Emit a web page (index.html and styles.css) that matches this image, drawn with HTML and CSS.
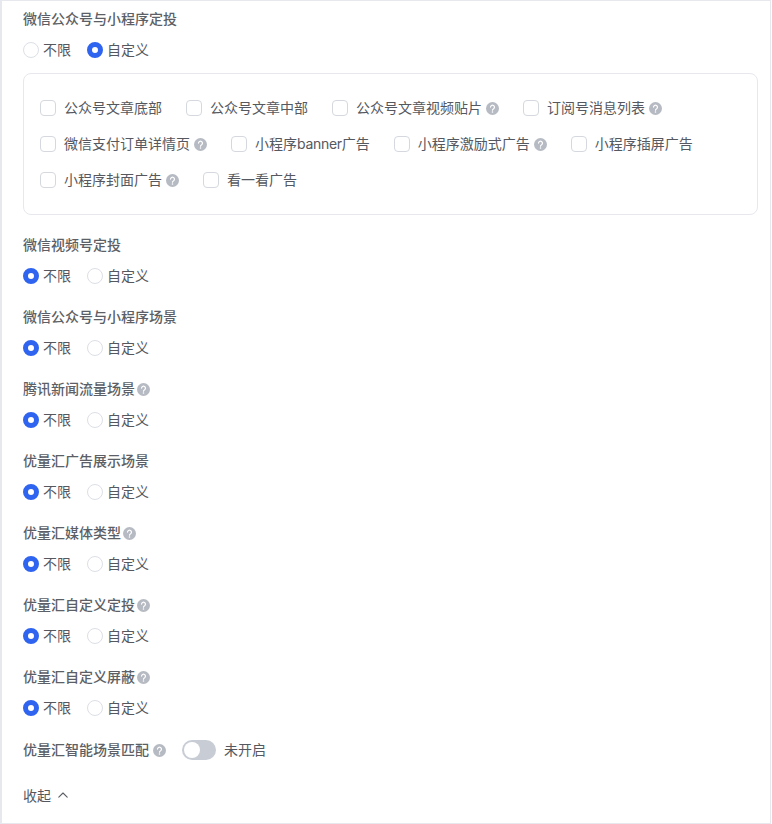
FILE: index.html
```html
<!DOCTYPE html>
<html lang="zh-CN">
<head>
    <meta charset="UTF-8">
    <title>定投设置</title>
    <link rel="stylesheet" href="styles.css">
</head>
<body>
<svg class="defs" width="0" height="0">
    <symbol id="help" viewBox="0 0 14 14">
        <circle cx="7" cy="7" r="7" fill="#b6bac2"/>
        <path d="M4.9 5.5a2.1 2.1 0 1 1 3.3 1.75c-.8.5-1.2.85-1.2 1.6" fill="none" stroke="#fff" stroke-width="1.3" stroke-linecap="round"/>
        <circle cx="7" cy="10.7" r=".85" fill="#fff"/>
    </symbol>
</svg>
<div class="panel">
    <section class="field">
        <div class="field-label">微信公众号与小程序定投</div>
        <div class="radios">
            <label class="radio"><i class="dot"></i>不限</label>
            <label class="radio on"><i class="dot"></i>自定义</label>
        </div>
        <div class="option-box">
            <div class="check-row">
                <label class="check"><i class="box"></i>公众号文章底部</label>
                <label class="check"><i class="box"></i>公众号文章中部</label>
                <label class="check"><i class="box"></i>公众号文章视频贴片<svg class="help"><use href="#help"/></svg></label>
                <label class="check"><i class="box"></i>订阅号消息列表<svg class="help"><use href="#help"/></svg></label>
            </div>
            <div class="check-row">
                <label class="check"><i class="box"></i>微信支付订单详情页<svg class="help"><use href="#help"/></svg></label>
                <label class="check"><i class="box"></i>小程序<span class="latin">banner</span>广告</label>
                <label class="check"><i class="box"></i>小程序激励式广告<svg class="help"><use href="#help"/></svg></label>
                <label class="check"><i class="box"></i>小程序插屏广告</label>
            </div>
            <div class="check-row">
                <label class="check"><i class="box"></i>小程序封面广告<svg class="help"><use href="#help"/></svg></label>
                <label class="check"><i class="box"></i>看一看广告</label>
            </div>
        </div>
    </section>

    <section class="field">
        <div class="field-label">微信视频号定投</div>
        <div class="radios">
            <label class="radio on"><i class="dot"></i>不限</label>
            <label class="radio"><i class="dot"></i>自定义</label>
        </div>
    </section>

    <section class="field">
        <div class="field-label">微信公众号与小程序场景</div>
        <div class="radios">
            <label class="radio on"><i class="dot"></i>不限</label>
            <label class="radio"><i class="dot"></i>自定义</label>
        </div>
    </section>

    <section class="field">
        <div class="field-label">腾讯新闻流量场景<svg class="help"><use href="#help"/></svg></div>
        <div class="radios">
            <label class="radio on"><i class="dot"></i>不限</label>
            <label class="radio"><i class="dot"></i>自定义</label>
        </div>
    </section>

    <section class="field">
        <div class="field-label">优量汇广告展示场景</div>
        <div class="radios">
            <label class="radio on"><i class="dot"></i>不限</label>
            <label class="radio"><i class="dot"></i>自定义</label>
        </div>
    </section>

    <section class="field">
        <div class="field-label">优量汇媒体类型<svg class="help"><use href="#help"/></svg></div>
        <div class="radios">
            <label class="radio on"><i class="dot"></i>不限</label>
            <label class="radio"><i class="dot"></i>自定义</label>
        </div>
    </section>

    <section class="field">
        <div class="field-label">优量汇自定义定投<svg class="help"><use href="#help"/></svg></div>
        <div class="radios">
            <label class="radio on"><i class="dot"></i>不限</label>
            <label class="radio"><i class="dot"></i>自定义</label>
        </div>
    </section>

    <section class="field">
        <div class="field-label">优量汇自定义屏蔽<svg class="help"><use href="#help"/></svg></div>
        <div class="radios">
            <label class="radio on"><i class="dot"></i>不限</label>
            <label class="radio"><i class="dot"></i>自定义</label>
        </div>
    </section>

    <div class="switch-row">
        <div class="field-label">优量汇智能场景匹配<svg class="help help-wide"><use href="#help"/></svg></div>
        <i class="switch"></i>
        <span>未开启</span>
    </div>

    <div class="collapse">
        收起
        <svg class="chevron" viewBox="0 0 10 6"><path d="M.8 5.2 5 1l4.200 4.200" fill="none" stroke="#5a5d63" stroke-width="1.1" stroke-linecap="round" stroke-linejoin="round"/></svg>
    </div>
</div>
</body>
</html>
```

FILE: styles.css
```css
* {
    box-sizing: border-box;
}

body {
    margin: 0;
    background: #fff;
    color: #55585e;
    font-family: "Inter", "Noto Sans CJK SC", sans-serif;
    font-size: 14px;
    line-height: 22px;
}

.defs {
    position: absolute;
}

.panel {
    width: 771px;
    height: 824px;
    padding: 7px 12px 0 21px;
    border: 1px solid #e6e8ee;
    border-left-width: 2px;
    overflow: hidden;
}

.field {
    margin-bottom: 19px;
}

.field-label {
    display: flex;
    align-items: center;
    height: 22px;
    font-weight: 500;
    color: #5c5f65;
}

.radios {
    display: flex;
    gap: 16px;
    margin-top: 9px;
}

.radio {
    display: flex;
    align-items: center;
    height: 22px;
}

.dot {
    width: 16px;
    height: 16px;
    margin-right: 4px;
    border: 1px solid #dcdfe6;
    border-radius: 50%;
    background: #fff;
}

.radio.on .dot {
    border: 5px solid #2f64f0;
}

.option-box {
    display: flex;
    flex-direction: column;
    gap: 14px;
    margin-top: 12px;
    padding: 23px 16px;
    border: 1px solid #e6e8ee;
    border-radius: 8px;
}

.check-row {
    display: flex;
    gap: 24px;
}

.check {
    display: flex;
    align-items: center;
    height: 22px;
}

.latin {
    letter-spacing: -0.3px;
}

.box {
    width: 16px;
    height: 16px;
    margin-right: 8px;
    border: 1px solid #d5d8df;
    border-radius: 4px;
    background: #fff;
}

.help {
    width: 13px;
    height: 13px;
    margin-left: 4px;
}

.field-label .help {
    margin-left: 2px;
}

.field-label .help-wide {
    margin-left: 4px;
}

.switch-row {
    display: flex;
    align-items: center;
    height: 24px;
}

.switch {
    position: relative;
    width: 34px;
    height: 20px;
    margin: 0 8px 0 16px;
    border-radius: 10px;
    background: #c8ccd4;
}

.switch::after {
    content: "";
    position: absolute;
    top: 2px;
    left: 2px;
    width: 16px;
    height: 16px;
    border-radius: 50%;
    background: #fff;
}

.collapse {
    display: flex;
    align-items: center;
    gap: 7px;
    margin-top: 23px;
}

.chevron {
    width: 10px;
    height: 6px;
    margin-top: -2px;
}
```
